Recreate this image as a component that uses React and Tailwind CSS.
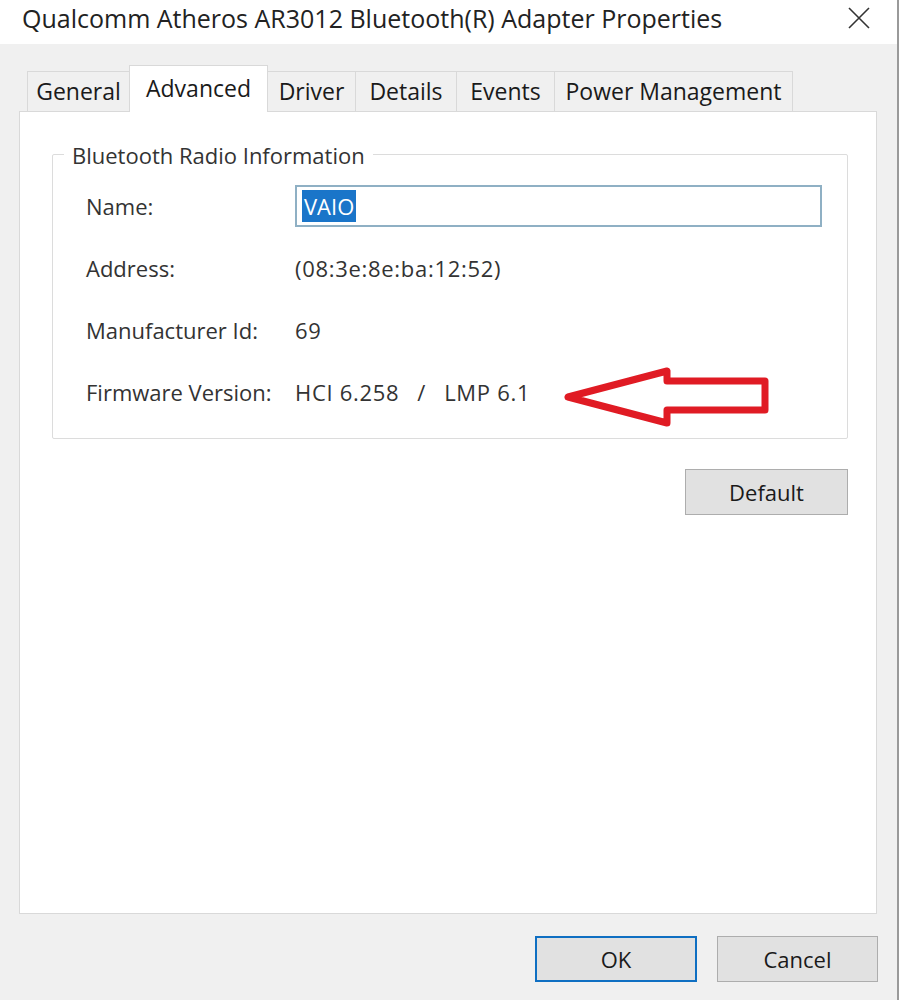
import React from 'react';

const font = { fontFamily: '"Open Sans", "Noto Sans", sans-serif' };

const tabs = [
  { label: 'General', w: 'w-[103px]' },
  { label: 'Advanced', w: 'w-[139px]', active: true },
  { label: 'Driver', w: 'w-[89px]' },
  { label: 'Details', w: 'w-[102px]' },
  { label: 'Events', w: 'w-[99px]' },
  { label: 'Power Management', w: 'w-[239px]' },
];

function Tab({ label, active, w }) {
  if (active) {
    return (
      <div className={'relative z-10 -mb-px -ml-px h-[47px] pt-[5px] bg-white border border-b-0 border-[#d9d9d9] text-center text-[23px] text-[#1a1a1a] ' + w}>
        {label}
      </div>
    );
  }
  return (
    <div className={'h-[40px] mt-[4px] -ml-px pt-[2px] bg-[#f0f0f0] border border-b-0 border-[#d9d9d9] text-center text-[23px] text-[#1a1a1a] ' + w}>
      {label}
    </div>
  );
}

function Row({ label, children }) {
  return (
    <div className="flex items-center h-[62px]">
      <div className="w-[209px] text-[22px] text-[#333]">{label}</div>
      <div className="flex-1 text-[22px] text-[#333] tracking-[0.7px]">{children}</div>
    </div>
  );
}

function Button({ children, primary, className = '' }) {
  return (
    <div
      className={
        'flex items-center justify-center h-[46px] bg-[#e1e1e1] text-[22px] text-[#1a1a1a] ' +
        (primary ? 'border-2 border-[#0f6fc2] ' : 'border border-[#adadad] ') +
        className
      }
    >
      {children}
    </div>
  );
}

export default function App() {
  return (
    <div className="relative w-[902px] h-[1000px] bg-[#f0f0f0] overflow-hidden flex" style={font}>
      <div className="flex-1 flex flex-col border-r-2 border-[#9a9a9a]">
        {/* Title bar */}
        <div className="h-[44px] bg-white flex items-center pl-[22px] pr-[26px]">
          <div className="flex-1 text-[25px] text-[#222] -mt-[7px]">
            Qualcomm Atheros AR3012 Bluetooth(R) Adapter Properties
          </div>
          <svg width="24" height="24" viewBox="0 0 24 24" className="-mt-[8px]">
            <path d="M2 2 L22 22 M22 2 L2 22" stroke="#333" strokeWidth="1.6" fill="none" />
          </svg>
        </div>

        <div className="flex-1 flex flex-col pl-[19px] pr-[20px]">
          {/* Tabs */}
          <div className="flex items-end pt-[21px] pl-[9px]">
            {tabs.map((t) => (
              <Tab key={t.label} {...t} />
            ))}
          </div>

          {/* Page */}
          <div className="h-[803px] bg-white border border-[#d9d9d9] pl-[32px] pr-[28px] pt-[42px]">
            <div className="relative border border-[#dcdcdc] rounded-[2px] h-[285px] pl-[33px] pr-[25px] pt-[20px]">
              <div className="absolute -top-[16px] left-[11px] bg-white px-[8px] text-[22px] text-[#333]">
                Bluetooth Radio Information
              </div>
              <Row label="Name:">
                <div className="h-[42px] border-2 border-[#8fb0c4] flex items-center pl-[5px]">
                  <span className="bg-[#1a75c9] text-white leading-[32px] px-[2px] tracking-normal">VAIO</span>
                </div>
              </Row>
              <Row label="Address:">(08:3e:8e:ba:12:52)</Row>
              <Row label="Manufacturer Id:">69</Row>
              <Row label="Firmware Version:">
                <span>HCI 6.258</span>
                <span className="mx-[18px]">/</span>
                <span>LMP 6.1</span>
              </Row>
            </div>
            <div className="flex justify-end pt-[30px]">
              <Button className="w-[163px]">Default</Button>
            </div>
          </div>

          {/* Bottom buttons */}
          <div className="flex justify-end gap-[20px] pt-[22px] -mr-[1px]">
            <Button primary className="w-[162px]">OK</Button>
            <Button className="w-[161px]">Cancel</Button>
          </div>
        </div>
      </div>
      <div className="w-[3px] bg-white" />

      {/* Red annotation arrow */}
      <svg className="absolute left-0 top-0 pointer-events-none" width="902" height="1000">
        <polygon
          points="568,397 667,371 667,381 765,381 765,410 667,410 667,423"
          fill="none"
          stroke="#e01b24"
          strokeWidth="7"
          strokeLinejoin="round"
        />
      </svg>
    </div>
  );
}
